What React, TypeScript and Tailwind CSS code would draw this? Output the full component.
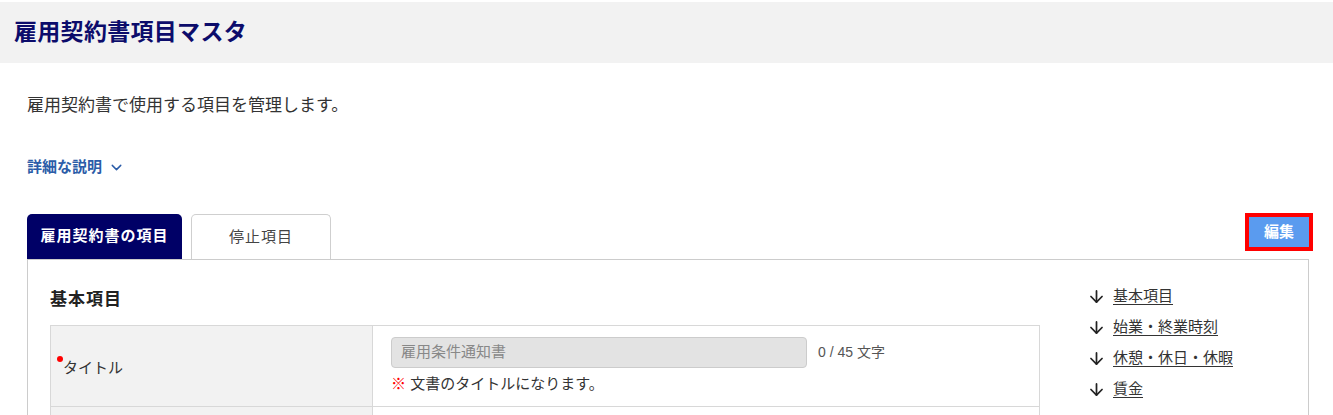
import React from 'react';
import { ArrowDown, ChevronDown } from 'lucide-react';

const navLinks = ['基本項目', '始業・終業時刻', '休憩・休日・休暇', '賃金'];

const App: React.FC = () => {
  return (
    <div className="min-h-screen bg-white pt-[2px] text-[#333] font-['Liberation_Sans','Noto_Sans_CJK_JP',sans-serif]">
      {/* Header */}
      <header className="h-[61px] bg-[#f2f2f2] flex items-center px-[14px]">
        <h1 className="text-[23px] font-bold text-[#0c0c6b] tracking-[0.3px]">雇用契約書項目マスタ</h1>
      </header>

      <div className="pl-[27px] pr-[24px]">
        <p className="mt-[31px] text-[17px] leading-[24px]">雇用契約書で使用する項目を管理します。</p>

        <button className="mt-[39px] flex items-center gap-[6px] h-[20px] text-[15px] font-bold text-[#2b5ca8]">
          詳細な説明
          <ChevronDown className="w-[17px] h-[17px]" strokeWidth={2} />
        </button>

        {/* Tabs + edit */}
        <div className="mt-[37px] flex items-start justify-between">
          <div className="flex items-end gap-[9px]">
            <div className="w-[155px] h-[45px] rounded-t-[5px] bg-[#000066] text-white text-[15px] font-bold tracking-[1px] flex items-center justify-center">
              雇用契約書の項目
            </div>
            <div className="w-[140px] h-[45px] rounded-t-[5px] border border-b-0 border-[#cfcfcf] bg-white text-[15px] tracking-[1px] text-[#444] flex items-center justify-center">
              停止項目
            </div>
          </div>
          <button className="mt-[3px] w-[60px] h-[30px] bg-[#5a9bef] text-white text-[15px] font-bold outline-[4px] outline-solid outline-[#ff0000] flex items-center justify-center">
            編集
          </button>
        </div>

        {/* Panel */}
        <div className="border border-[#cccccc] pl-[22px] pt-[21px] flex">
          <div className="w-[990px] pt-[6px]">
            <h2 className="text-[17px] leading-[26px] font-bold tracking-[1px] text-[#222]">基本項目</h2>
            <div className="mt-[12px] border border-[#d8d8d8]">
              <div className="flex">
                <div className="w-[322px] bg-[#f2f2f2] border-r border-[#d8d8d8] flex items-center pl-[6px]">
                  <span className="flex items-start">
                    <span className="mt-[2px] w-[6px] h-[6px] rounded-full bg-[#ff0000]" />
                    <span className="mt-[4px] text-[15px] leading-[20px]">タイトル</span>
                  </span>
                </div>
                <div className="flex-1 pl-[18px] pt-[11px] pb-[12px]">
                  <div className="flex items-center gap-[11px]">
                    <div className="w-[416px] h-[31px] rounded-[4px] border border-[#cccccc] bg-[#e3e3e3] flex items-center px-[9px] text-[15px] text-[#888]">
                      雇用条件通知書
                    </div>
                    <span className="text-[14px] text-[#555]">0 / 45 文字</span>
                  </div>
                  <p className="mt-[6px] text-[15px] leading-[20px]">
                    <span className="text-[#ff0000]">※</span> 文書のタイトルになります。
                  </p>
                </div>
              </div>
              <div className="flex border-t border-[#d8d8d8] h-[70px]">
                <div className="w-[322px] bg-[#f2f2f2] border-r border-[#d8d8d8]" />
                <div className="flex-1" />
              </div>
            </div>
          </div>

          {/* Right nav */}
          <nav className="ml-[47px] flex flex-col">
            {navLinks.map((label) => (
              <a key={label} href="#" className="h-[31px] flex items-center gap-[7px] text-[15px] text-[#333]">
                <ArrowDown className="w-[19px] h-[19px] text-[#222]" strokeWidth={2.2} />
                <span className="underline underline-offset-[3px]">{label}</span>
              </a>
            ))}
          </nav>
        </div>
      </div>
    </div>
  );
};

export default App;
